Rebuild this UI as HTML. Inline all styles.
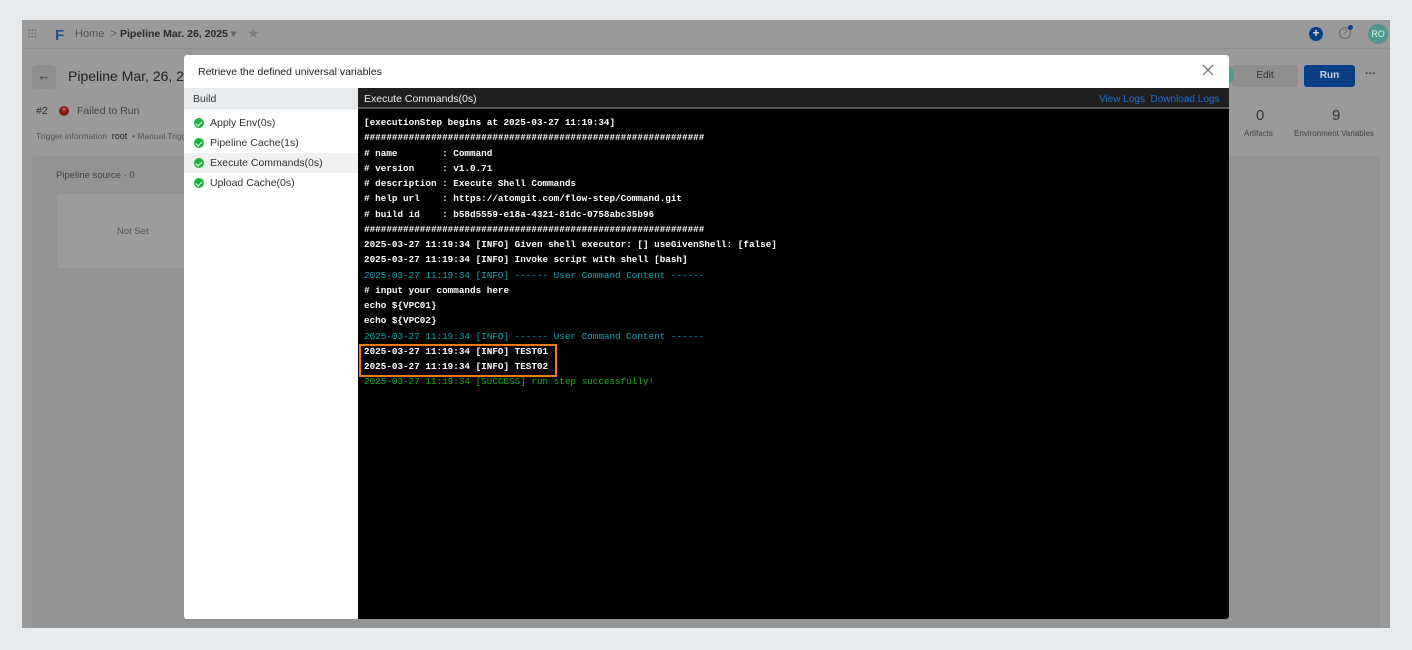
<!DOCTYPE html>
<html><head><meta charset="utf-8"><style>
*{box-sizing:border-box;margin:0;padding:0}
body{width:1412px;height:650px;background:#e8ecef;position:relative;overflow:hidden;font-family:"Liberation Sans",sans-serif}
.a{position:absolute}
.app{left:22px;top:20px;width:1368px;height:608px;background:#9a9a9a;overflow:hidden}
.t{color:#2a2a2a;font-size:11px;white-space:nowrap}
.log{font-family:"Liberation Mono",monospace;font-size:9.3px;line-height:15.25px;color:#fff;white-space:pre;font-weight:bold}
.c{color:#0aa9b0;font-weight:normal}.g{color:#16b316;font-weight:normal}
.step{position:absolute;left:0;width:174px;height:20px;font-size:10.5px;color:#333;padding-left:26px;line-height:20px}
.ck{position:absolute;left:10px;top:5px;width:10px;height:10px;border-radius:50%;background:#1bb33a}
.ck:after{content:"";position:absolute;left:3px;top:1.5px;width:2.5px;height:4.5px;border:solid #fff;border-width:0 1.5px 1.5px 0;transform:rotate(45deg)}
</style></head><body>
<div class="a app">
  <div class="a" style="left:0;top:0;width:1368px;height:29px;border-bottom:1px solid #8f8f8f"></div>
  <div class="a t" style="left:5px;top:6px;color:#6a6a6a;font-size:13px;letter-spacing:-1px">⁝⁝⁝</div>
  <div class="a" style="left:33px;top:7px;font-weight:bold;color:#1e4f8e;font-size:15px">F</div>
  <div class="a t" style="left:53px;top:8px;color:#555">Home &nbsp;&gt;</div>
  <div class="a t" style="left:98px;top:8px;font-weight:bold;font-size:10.5px">Pipeline Mar. 26, 2025 <span style="color:#666">▾</span></div>
  <div class="a t" style="left:225px;top:5px;color:#7c7c7c;font-size:14px">★</div>
  <div class="a" style="left:1287px;top:7px;width:14px;height:14px;border-radius:50%;background:#0a3f86;color:#ddd;font-size:12px;line-height:13px;text-align:center;font-weight:bold">+</div>
  <div class="a" style="left:1317px;top:7px;width:12px;height:12px;border-radius:50%;border:1.3px solid #666;color:#666;font-size:8px;line-height:10px;text-align:center">?</div>
  <div class="a" style="left:1326px;top:5px;width:5px;height:5px;border-radius:50%;background:#0a3f86"></div>
  <div class="a" style="left:1346px;top:4px;width:20px;height:20px;border-radius:50%;background:#4e9890;color:#cfd;font-size:9px;line-height:20px;text-align:center">RO</div>
  <div class="a" style="left:10px;top:45px;width:24px;height:24px;border-radius:4px;background:#8e8e8e;color:#333;font-size:13px;line-height:22px;text-align:center">←</div>
  <div class="a t" style="left:46px;top:48px;font-size:14px;color:#222">Pipeline Mar, 26, 2025</div>
  <div class="a t" style="left:14px;top:85px;font-size:10.5px">#2</div>
  <div class="a" style="left:37px;top:86px;width:10px;height:10px;border-radius:50%;background:#8e1c1c;color:#caa;font-size:7px;line-height:10px;text-align:center">×</div>
  <div class="a t" style="left:55px;top:85px;font-size:10.5px;color:#444">Failed to Run</div>
  <div class="a t" style="left:14px;top:111px;font-size:8.5px;color:#555">Trigger information &nbsp;<span style="color:#222;font-size:9px">root</span> &nbsp;• Manual Trigger</div>
  <div class="a" style="left:1210px;top:45px;width:66px;height:22px;border-radius:3px;background:#8e8e8e;color:#333;font-size:10px;text-align:center;line-height:22px">Edit</div>
  <div class="a" style="left:1282px;top:45px;width:51px;height:22px;border-radius:3px;background:#0a3f86;color:#c8d0e0;font-size:10px;text-align:center;line-height:22px;font-weight:bold">Run</div>
  <div class="a t" style="left:1343px;top:48px;font-weight:bold;color:#333">···</div>
  <div class="a" style="left:1200px;top:46px;width:12px;height:18px;border-radius:50%;background:#4e9890"></div>
  <div class="a t" style="left:1234px;top:87px;font-size:15px;color:#333">0</div>
  <div class="a t" style="left:1222px;top:109px;font-size:8px;color:#444">Artifacts</div>
  <div class="a t" style="left:1310px;top:87px;font-size:15px;color:#333">9</div>
  <div class="a t" style="left:1272px;top:109px;font-size:8px;color:#444">Environment Variables</div>
  <div class="a" style="left:10px;top:136px;width:1348px;height:480px;border-radius:4px;background:#929394"></div>
  <div class="a t" style="left:34px;top:150px;font-size:9.5px;color:#444">Pipeline source · 0</div>
  <div class="a" style="left:35px;top:174px;width:150px;height:74px;border-radius:3px;background:#9c9c9c"></div>
  <div class="a t" style="left:95px;top:206px;font-size:9.5px;color:#555">Not Set</div>
</div>
<!-- modal -->
<div class="a" style="left:184px;top:55px;width:1045px;height:564px;background:#fff;border-radius:3px;overflow:hidden">
  <div class="a t" style="left:14px;top:11px;font-size:10.5px;color:#222">Retrieve the defined universal variables</div>
  <svg class="a" style="left:1018px;top:9px" width="12" height="12" viewBox="0 0 12 12"><path d="M1 1L11 11M11 1L1 11" stroke="#666" stroke-width="1.2"/></svg>
  <div class="a" style="left:0;top:33px;width:174px;height:21px;background:#e9ecef;border-bottom:1px solid #dde"></div>
  <div class="a t" style="left:9px;top:38px;font-size:10.5px;color:#333">Build</div>
  <div class="step" style="top:58px"><i class="ck"></i>Apply Env(0s)</div>
  <div class="step" style="top:78px"><i class="ck"></i>Pipeline Cache(1s)</div>
  <div class="step" style="top:98px;background:#eef0f2"><i class="ck"></i>Execute Commands(0s)</div>
  <div class="step" style="top:118px"><i class="ck"></i>Upload Cache(0s)</div>
  <div class="a" style="left:174px;top:33px;width:871px;height:531px;background:#000"></div>
  <div class="a" style="left:174px;top:33px;width:871px;height:21px;background:#1f1f1f;border-bottom:2px solid #555"></div>
  <div class="a t" style="left:180px;top:38px;font-size:10.5px;color:#eee">Execute Commands(0s)</div>
  <div class="a t" style="left:915px;top:39px;font-size:10px;color:#1e6fd0">View Logs &nbsp;Download Logs</div>
  <div class="a log" style="left:180px;top:60px">[executionStep begins at 2025-03-27 11:19:34]
#############################################################
# name        : Command
# version     : v1.0.71
# description : Execute Shell Commands
# help url    : https://atomgit.com/flow-step/Command.git
# build id    : b58d5559-e18a-4321-81dc-0758abc35b96
#############################################################
2025-03-27 11:19:34 [INFO] Given shell executor: [] useGivenShell: [false]
2025-03-27 11:19:34 [INFO] Invoke script with shell [bash]
<span class="c">2025-03-27 11:19:34 [INFO] ------ User Command Content ------</span>
# input your commands here
echo ${VPC01}
echo ${VPC02}
<span class="c">2025-03-27 11:19:34 [INFO] ------ User Command Content ------</span>
2025-03-27 11:19:34 [INFO] TEST01
2025-03-27 11:19:34 [INFO] TEST02
<span class="g">2025-03-27 11:19:34 [SUCCESS] run step successfully!</span></div>
  <div class="a" style="left:175px;top:289px;width:198px;height:33px;border:2px solid #f07a12"></div>
</div>
</body></html>
